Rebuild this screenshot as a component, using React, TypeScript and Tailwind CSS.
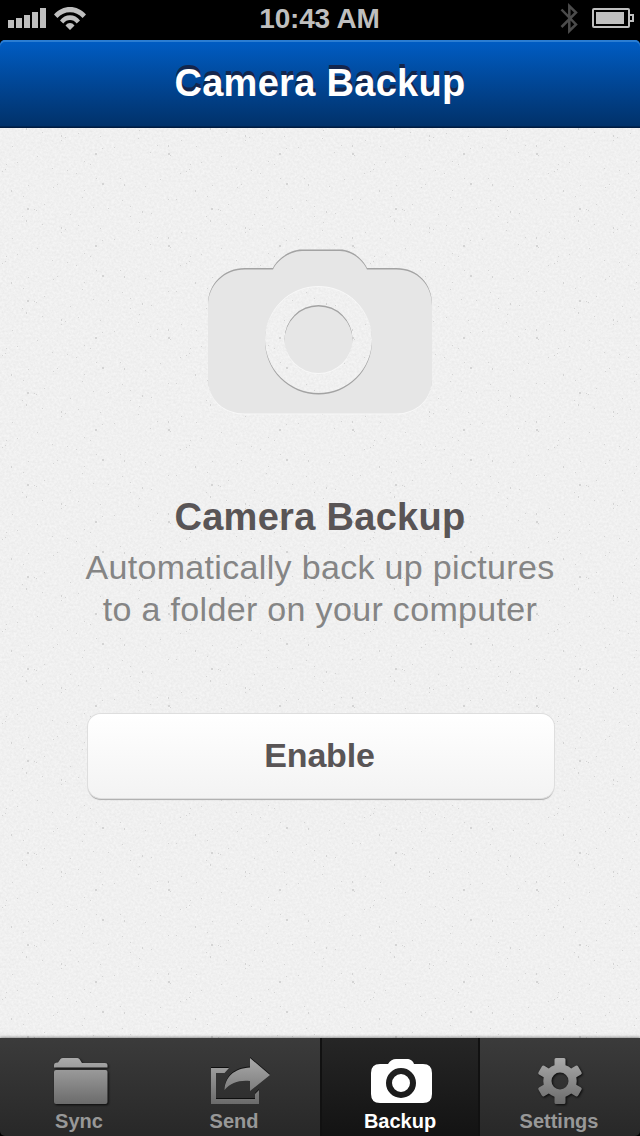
import type { ReactNode } from "react";

const FINE_SPECKS: [number, number][] = [
  [6, 36], [12, 18], [17, 34], [11, 62], [2, 43], [28, 57], [36, 82], [22, 88], [44, 76], [52, 132],
  [67, 134], [76, 45], [84, 62], [93, 79], [102, 112], [96, 142], [114, 19], [122, 72], [130, 88], [139, 94],
  [150, 24], [145, 58], [160, 51], [170, 119], [157, 109], [176, 71], [84, 33], [61, 12], [65, 9], [42, 4],
  [11, 155], [23, 160], [34, 173], [53, 151], [70, 178], [82, 161], [130, 170], [151, 177], [120, 142], [168, 163],
  [100, 100], [138, 10], [181, 12], [57, 56], [78, 97], [90, 128], [180, 137], [37, 120], [5, 133], [108, 172],
];

const BOLD_SPECKS: [number, number][] = [
  [27, 80], [26, 92], [61, 7], [102, 55], [142, 83], [168, 17], [168, 117], [124, 148], [27, 172], [95, 25],
];

function Plaster() {
  return (
    <svg className="absolute inset-0 h-full w-full" aria-hidden="true">
      <defs>
        <filter id="grain" x="0" y="0" width="100%" height="100%" colorInterpolationFilters="sRGB">
          <feTurbulence type="fractalNoise" baseFrequency="0.42" numOctaves="3" seed="7" />
          <feColorMatrix values="0.065 0 0 0 0.908  0.065 0 0 0 0.908  0.065 0 0 0 0.908  0 0 0 0 1" />
        </filter>
        <pattern id="specks" width="184" height="92" patternUnits="userSpaceOnUse">
          {FINE_SPECKS.map(([x, y], i) => (
            <rect key={i} x={x} y={y % 92} width="1" height="1" fill="#d4d4d4" />
          ))}
          {BOLD_SPECKS.map(([x, y], i) => (
            <rect key={i} x={x} y={y % 92} width={i % 3 ? 1 : 2} height="2" fill="#d4d4d4" />
          ))}
        </pattern>
      </defs>
      <rect width="100%" height="100%" fill="#f0f0f0" filter="url(#grain)" />
      <rect width="100%" height="100%" fill="url(#specks)" />
    </svg>
  );
}

function StatusBar() {
  return (
    <div className="grid h-10 shrink-0 grid-cols-3 bg-black">
      <svg width="100" height="40" viewBox="0 0 100 40" fill="#bfbfbf">
        <path d="M8 20h6v8H8zM16 18h6v10h-6zM24 15h6v13h-6zM32 12h6v16h-6zM40 8h6v20h-6z" />
        <path d="M54 14.500C62.500 4.500 77.500 4.500 86 14.500L82.600 17.900C76 10.300 64 10.300 57.400 17.900ZM60 20.400C65 13.500 75 13.500 80 20.400L76.700 23.400C73.200 18.900 66.800 18.900 63.300 23.400ZM65.500 25.500C68 22.200 72 22.200 74.500 25.500L70 30Z" />
      </svg>
      <div className="pt-[3px] text-center text-[28px] leading-8 font-bold tracking-[-0.2px] text-[#bfbfbf]">
        <span className="-ml-[1px]">10:43 AM</span>
      </div>
      <svg className="justify-self-end" width="90" height="40" viewBox="550 0 90 40">
        <path d="M561.500 9.500L576 24.500L569.300 31V6L576 12.500L561.500 27" fill="none" stroke="#4b4b4b" strokeWidth="2.500" />
        <rect x="593" y="9" width="36" height="18" rx="1" fill="none" stroke="#bfbfbf" strokeWidth="2" />
        <path d="M596 12h28v12h-28z" fill="#bfbfbf" />
        <path d="M630 15h3v6h-3" fill="none" stroke="#bfbfbf" strokeWidth="2" />
      </svg>
    </div>
  );
}

const BODY =
  "M245 268H273C277 259 290 249.500 302 249.500H340C352 249.500 363 259 367 268H396C418 268 432 284 432 304V378C432 400 416 413.500 396 413.500H245C224 413.500 208 400 208 378V304C208 284 224 268 245 268ZM318.500 286A53.500 53.500 0 1 0 318.500 393A53.500 53.500 0 1 0 318.500 286ZM318.500 305A34 34 0 1 1 318.500 373A34 34 0 1 1 318.500 305Z";

function EngravedCamera() {
  return (
    <svg width="230" height="170" viewBox="205 247 230 170">
      <defs>
        <clipPath id="body">
          <path d={BODY} clipRule="evenodd" />
        </clipPath>
        <filter id="soft" x="-5%" y="-5%" width="110%" height="110%">
          <feGaussianBlur stdDeviation="0.3 0.6" />
        </filter>
      </defs>
      <path d={BODY} fillRule="evenodd" fill="#f8f8f8" transform="translate(0 1)" />
      <path d={BODY} fillRule="evenodd" fill="#e6e6e6" />
      <g clipPath="url(#body)">
        <path
          d={`M190 230H450V430H190Z${BODY}`}
          fillRule="evenodd"
          fill="#a3a3a3"
          transform="translate(0 1.500)"
          filter="url(#soft)"
        />
      </g>
    </svg>
  );
}

function FolderIcon() {
  return (
    <svg width="60" height="52" viewBox="50 1055 60 52" className="drop-shadow-[1px_1px_1px_rgba(0,0,0,0.8)]">
      <path d="M54 1067.500V1065Q54 1063.200 56 1062.800L58 1062.500L60.500 1059Q61.300 1058 63 1058H77.500Q79 1058 79.800 1059.500L82 1063H105Q107.500 1063 107.500 1065V1067.500Z" fill="url(#metal)" />
      <rect x="54" y="1070" width="53.500" height="34" rx="2" fill="url(#metal)" />
    </svg>
  );
}

function SendIcon() {
  return (
    <svg width="64" height="52" viewBox="208 1055 64 52" className="drop-shadow-[0px_-1px_0.5px_rgba(0,0,0,0.7)]">
      <path d="M211 1068H229L224.500 1073H216V1099H255V1094L259 1090V1104H211Z" fill="url(#metal)" />
      <path d="M250 1058L270 1075L250 1091V1081C239 1080 231 1082.500 224.500 1090C225 1077 234 1068.500 250 1067.500Z" fill="url(#metal)" />
    </svg>
  );
}

function CameraIcon() {
  return (
    <svg width="64" height="52" viewBox="369 1055 64 52">
      <path
        fill="#fff"
        fillRule="evenodd"
        d="M380 1064H388C390 1060.500 393 1059 396 1059H407C410 1059 413 1060.500 414 1064H423Q432 1064 432 1073V1094Q432 1103 423 1103H380Q371 1103 371 1094V1073Q371 1064 380 1064ZM401 1068A15 15 0 1 0 401 1098A15 15 0 1 0 401 1068ZM401 1074A9 9 0 1 1 401 1092A9 9 0 1 1 401 1074Z"
      />
    </svg>
  );
}

function GearIcon() {
  return (
    <svg width="52" height="52" viewBox="533.500 1055 52 52" className="drop-shadow-[1px_1px_1px_rgba(0,0,0,0.8)]">
      <defs>
        <mask id="hub">
          <rect x="533" y="1050" width="54" height="60" fill="#fff" />
          <circle cx="559.500" cy="1081" r="8.500" fill="#000" />
        </mask>
      </defs>
      <g fill="url(#metal)" mask="url(#hub)">
        <path d="M554 1059.500Q554 1058 555.500 1058H563.500Q565 1058 565 1059.500V1065.300Q568.300 1066.300 570.700 1068.400L575.300 1065.800Q576.700 1065 577.500 1066.300L581 1072.300Q581.800 1073.700 580.500 1074.500L575.800 1077.300Q576.600 1081 575.800 1084.700L580.500 1087.500Q581.800 1088.300 581 1089.700L577.500 1095.700Q576.700 1097 575.300 1096.200L570.700 1093.600Q568.300 1095.700 565 1096.700V1102.500Q565 1104 563.500 1104H555.500Q554 1104 554 1102.500V1096.700Q550.700 1095.700 548.300 1093.600L543.700 1096.200Q542.300 1097 541.500 1095.700L538 1089.700Q537.200 1088.300 538.500 1087.500L543.200 1084.700Q542.400 1081 543.200 1077.300L538.500 1074.500Q537.200 1073.700 538 1072.300L541.500 1066.300Q542.300 1065 543.700 1065.800L548.300 1068.400Q550.700 1066.300 554 1065.300Z" />
      </g>
    </svg>
  );
}

function Tab({ label, active, iconClass = "", className = "", children }: { label: string; active?: boolean; iconClass?: string; className?: string; children: ReactNode }) {
  return (
    <button
      className={`flex flex-col items-center pt-[17px] ${
        active
          ? "border-x-2 border-[#111] bg-linear-to-b from-[#262626] to-[#131313] text-white"
          : "text-[#989898]"
      } ${className}`}
    >
      <span className={iconClass}>{children}</span>
      <span className="mt-[3px] text-[20px] leading-[22px] font-bold">{label}</span>
    </button>
  );
}

function TabBar() {
  return (
    <nav className="relative grid h-[98px] shrink-0 grid-cols-4 overflow-hidden rounded-b-[5px] bg-linear-to-b from-[#3b3b3b] to-[#282828] shadow-[0_-1px_3px_rgba(0,0,0,0.4)]">
      <svg width="0" height="0" className="absolute">
        <linearGradient id="metal" gradientUnits="userSpaceOnUse" x1="0" y1="1058" x2="0" y2="1104">
          <stop stopColor="#aaaaaa" />
          <stop offset="1" stopColor="#6b6b6b" />
        </linearGradient>
      </svg>
      <Tab label="Sync" className="pr-[2px]" iconClass="pl-[2px]"><FolderIcon /></Tab>
      <Tab label="Send" className="pr-[12px]" iconClass="pl-[12px]"><SendIcon /></Tab>
      <Tab label="Backup" active iconClass="pl-[2px]"><CameraIcon /></Tab>
      <Tab label="Settings" className="pr-[2px]" iconClass="pl-[1px]"><GearIcon /></Tab>
    </nav>
  );
}

export default function App() {
  return (
    <div className="flex h-[1136px] w-[640px] flex-col overflow-hidden bg-black font-['Liberation_Sans',Arial,sans-serif]">
      <StatusBar />
      <header className="z-10 h-[88px] shrink-0 rounded-t-[5px] border-b border-[#001c42] bg-linear-to-b from-[#005dc5] to-[#013169] pt-[21px] text-center shadow-[inset_0_2px_0_#2b7dd2,inset_0_-1px_0_#012653]">
        <h1 className="text-[38px] leading-[44px] font-bold tracking-[0.3px] text-white [text-shadow:0_-2px_0_#14264d,0_-4px_0_#14264d]">Camera Backup</h1>
      </header>
      <main className="relative flex-1 bg-[#f0f0f0]">
        <Plaster />
        <div className="relative flex flex-col items-center pt-[119px]">
          <EngravedCamera />
          <h2 className="mt-[78px] text-[38px] leading-[44px] font-bold tracking-[0.3px] text-[#595556]">Camera Backup</h2>
          <p className="mt-[7px] text-center text-[34px] leading-[42px] tracking-[0.33px] text-[#858585]">
            Automatically back up pictures
            <br />
            to a folder on your computer
          </p>
          <button className="mt-[84px] ml-[2px] h-[84px] w-[466px] rounded-[13px] bg-linear-to-b from-white to-[#f3f3f3] pr-[3px] pb-[2px] text-[34px] leading-[82px] font-bold tracking-[-0.2px] text-[#595556] shadow-[0_0_0_1px_#dedede,0_2px_1px_#aaaaaa]">
            Enable
          </button>
        </div>
      </main>
      <TabBar />
    </div>
  );
}
